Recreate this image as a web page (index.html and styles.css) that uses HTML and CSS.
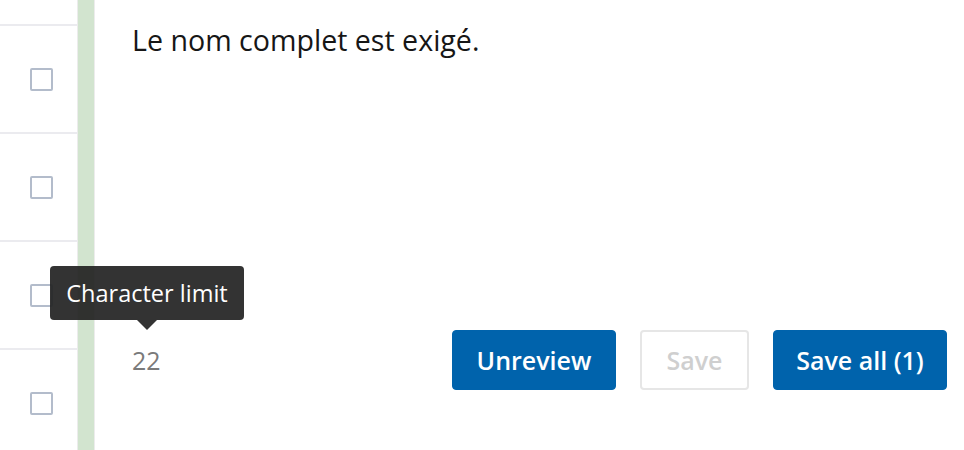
FILE: index.html
```html
<!DOCTYPE html>
<html lang="fr">
<head>
<meta charset="utf-8">
<link rel="stylesheet" href="styles.css">
</head>
<body>
<div class="page">
  <div class="rows">
    <div class="row row-first"></div>
    <div class="row"><span class="checkbox"></span></div>
    <div class="row"><span class="checkbox"></span></div>
    <div class="row"><span class="checkbox"></span></div>
    <div class="row"><span class="checkbox"></span></div>
  </div>
  <div class="status-bar"></div>
  <div class="editor">
    <p class="translation">Le nom complet est exigé.</p>
    <div class="footer">
      <div class="counter">
        <span class="count">22</span>
        <div class="tooltip">Character limit</div>
      </div>
      <div class="actions">
        <button class="btn btn-primary btn-unreview">Unreview</button>
        <button class="btn btn-disabled" disabled>Save</button>
        <button class="btn btn-primary btn-saveall">Save all (1)</button>
      </div>
    </div>
  </div>
</div>
</body>
</html>
```

FILE: styles.css
```css
* { box-sizing: border-box; }
html, body {
  margin: 0;
  padding: 0;
  background: #ffffff;
  font-family: "Open Sans", "Liberation Sans", sans-serif;
}
.page {
  display: flex;
  height: 450px;
  overflow: hidden;
}
.rows {
  width: 77px;
  flex: none;
  display: flex;
  flex-direction: column;
}
.row {
  height: 108px;
  flex: none;
  border-bottom: 2px solid #ebebef;
  display: flex;
  align-items: center;
  padding-left: 30px;
}
.row-first { height: 26px; }
.checkbox {
  width: 23px;
  height: 23px;
  border: 2px solid #b3bccb;
  border-radius: 2px;
  background: #fff;
}
.status-bar {
  width: 18px;
  flex: none;
  background: #d2e4cf;
  border-left: 1px solid #ececec;
  border-right: 1px solid #ececec;
}
.editor {
  flex: 1;
  display: flex;
  flex-direction: column;
  padding: 22px 17px 0 37px;
}
.translation {
  margin: 0;
  font-size: 28.6px;
  line-height: 36px;
  color: #161616;
}
.footer {
  margin-top: 272px;
  display: flex;
  align-items: center;
  justify-content: space-between;
}
.counter {
  position: relative;
  font-size: 25px;
  color: #7a7a7a;
}
.count { display: block; line-height: 30px; }
.tooltip {
  position: absolute;
  left: -82px;
  bottom: 55px;
  width: 194px;
  height: 54px;
  background: rgba(34, 34, 34, 0.92);
  color: #fff;
  border-radius: 4px;
  font-size: 23.5px;
  line-height: 54px;
  text-align: center;
  white-space: nowrap;
}
.tooltip::after {
  content: "";
  position: absolute;
  left: 50%;
  margin-left: -10px;
  bottom: -10px;
  border-left: 10px solid transparent;
  border-right: 10px solid transparent;
  border-top: 10px solid rgba(34, 34, 34, 0.92);
}
.actions {
  display: flex;
  gap: 24px;
}
.btn {
  height: 60px;
  border-radius: 4px;
  font-family: inherit;
  font-size: 25px;
  font-weight: 600;
  padding: 0;
}
.btn-primary {
  background: #0063ac;
  border: 1px solid #0063ac;
  color: #fff;
}
.btn-unreview { width: 164px; }
.btn-saveall { width: 174px; }
.btn-disabled {
  width: 109px;
  background: #fff;
  border: 2px solid #e6e6e6;
  color: #cfcfcf;
}
```
